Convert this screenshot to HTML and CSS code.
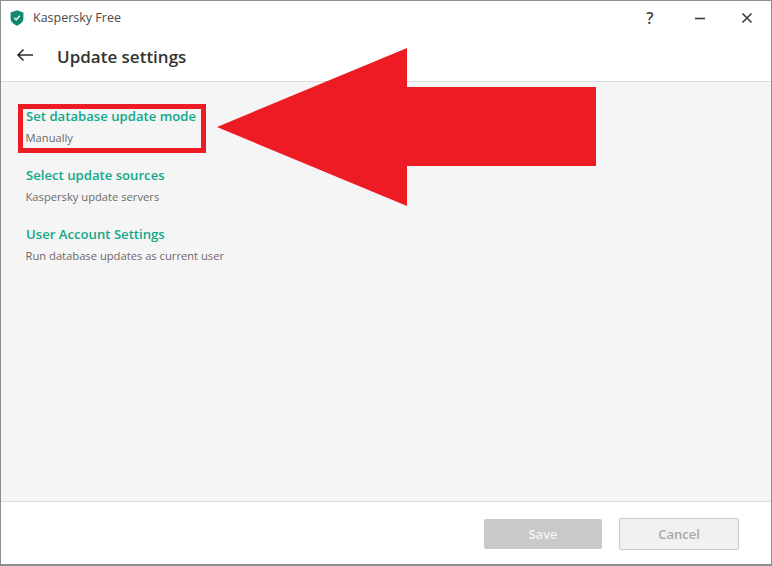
FILE: index.html
```html
<!DOCTYPE html>
<html lang="en">
<head>
<meta charset="utf-8">
<title>Update settings</title>
<link rel="stylesheet" href="styles.css">
</head>
<body>
<div class="window">
  <div class="titlebar">
    <svg class="shield" width="14" height="16" viewBox="0 0 14 16"><path d="M7 0.3 L13.4 2.6 V8.5 C13.4 12 10 14.4 7 15.8 C4 14.4 0.6 12 0.6 8.5 V2.6 Z" fill="#0f8a70"/><path d="M4.2 7.8 L6.2 9.8 L9.8 5.8" fill="none" stroke="#e4f3ef" stroke-width="1.5"/></svg>
    <span class="app-name">Kaspersky Free</span>
    <div class="controls">
      <span class="help">?</span>
      <svg width="12" height="12" viewBox="0 0 12 12"><path d="M1 6.5 H11" stroke="#3a3a3a" stroke-width="1.6"/></svg>
      <svg width="12" height="12" viewBox="0 0 12 12"><path d="M1.5 1.5 L10.5 10.5 M10.5 1.5 L1.5 10.5" stroke="#3a3a3a" stroke-width="1.6"/></svg>
    </div>
  </div>
  <div class="pagehead">
    <svg class="back" width="18" height="14" viewBox="0 0 18 14"><path d="M17 7 H2 M7.5 1.5 L2 7 L7.5 12.5" fill="none" stroke="#2f2f2f" stroke-width="1.6"/></svg>
    <h1 class="page-title">Update settings</h1>
  </div>
  <main class="content">
    <section class="item">
      <a class="item-link">Set database update mode</a>
      <p class="item-note">Manually</p>
    </section>
    <section class="item">
      <a class="item-link">Select update sources</a>
      <p class="item-note">Kaspersky update servers</p>
    </section>
    <section class="item">
      <a class="item-link">User Account Settings</a>
      <p class="item-note">Run database updates as current user</p>
    </section>
  </main>
  <footer class="footer">
    <button class="btn btn-save">Save</button>
    <button class="btn btn-cancel">Cancel</button>
  </footer>
</div>
<div class="callout-box"></div>
<svg class="callout-arrow" width="380" height="160" viewBox="0 0 380 160"><path d="M0 79 L190 0 V39 H379 V118 H190 V158 Z" fill="#ed1c24"/></svg>
</body>
</html>
```
FILE: styles.css
```css
* { box-sizing: border-box; }
html, body { margin: 0; padding: 0; }
body {
  width: 772px;
  height: 566px;
  position: relative;
  overflow: hidden;
  font-family: "Open Sans", "Noto Sans", sans-serif;
  background: #fff;
}
.window {
  width: 772px;
  height: 566px;
  display: flex;
  flex-direction: column;
  border: 1px solid #87918f;
  border-bottom-width: 2px;
  background: #fff;
}
.titlebar {
  height: 33px;
  display: flex;
  align-items: center;
  padding-left: 9px;
  padding-right: 18px;
}
.shield { margin-right: 9px; }
.app-name { font-size: 12.5px; color: #4a4a4a; }
.controls { margin-left: auto; display: flex; align-items: center; gap: 35px; }
.help { font-size: 16px; font-weight: 600; color: #444; width: 10px; text-align: center; margin-right: 4px; }
.pagehead {
  height: 48px;
  display: flex;
  align-items: center;
  padding-left: 15px;
  padding-bottom: 3px;
  border-bottom: 1px solid #dcdcdc;
}
.back { margin-right: 23px; margin-top: -3px; }
.page-title { margin: 0; font-size: 17px; font-weight: 600; color: #333; }
.content {
  flex: 1;
  background: #f5f5f5;
  padding: 24px 0 0 25px;
  display: flex;
  flex-direction: column;
  gap: 17px;
}
.item { height: 42px; }
.item-link { display: block; font-size: 13.15px; font-weight: 600; line-height: 20px; color: #0fa889; }
.item-note { margin: 3px 0 0 -0.5px; font-size: 11.2px; line-height: 18px; color: #6e6a6a; }
.footer {
  height: 63px;
  border-top: 1px solid #dcdcdc;
  display: flex;
  justify-content: flex-end;
  align-items: center;
  gap: 17px;
  padding-right: 32px;
  padding-top: 2px;
}
.btn {
  height: 30px;
  border-radius: 2px;
  font-family: inherit;
  font-size: 13px;
  font-weight: 600;
  padding: 0;
}
.btn-save { width: 118px; background: #c9c9c9; border: none; color: #f4f4f4; }
.btn-cancel { width: 120px; height: 32px; background: #f1f1f1; border: 1px solid #c9c9c9; color: #a8a8a8; }
.callout-box {
  position: absolute;
  left: 18px;
  top: 104px;
  width: 188px;
  height: 49px;
  border: 5px solid #ed1c24;
}
.callout-arrow { position: absolute; left: 217px; top: 48px; }
```
